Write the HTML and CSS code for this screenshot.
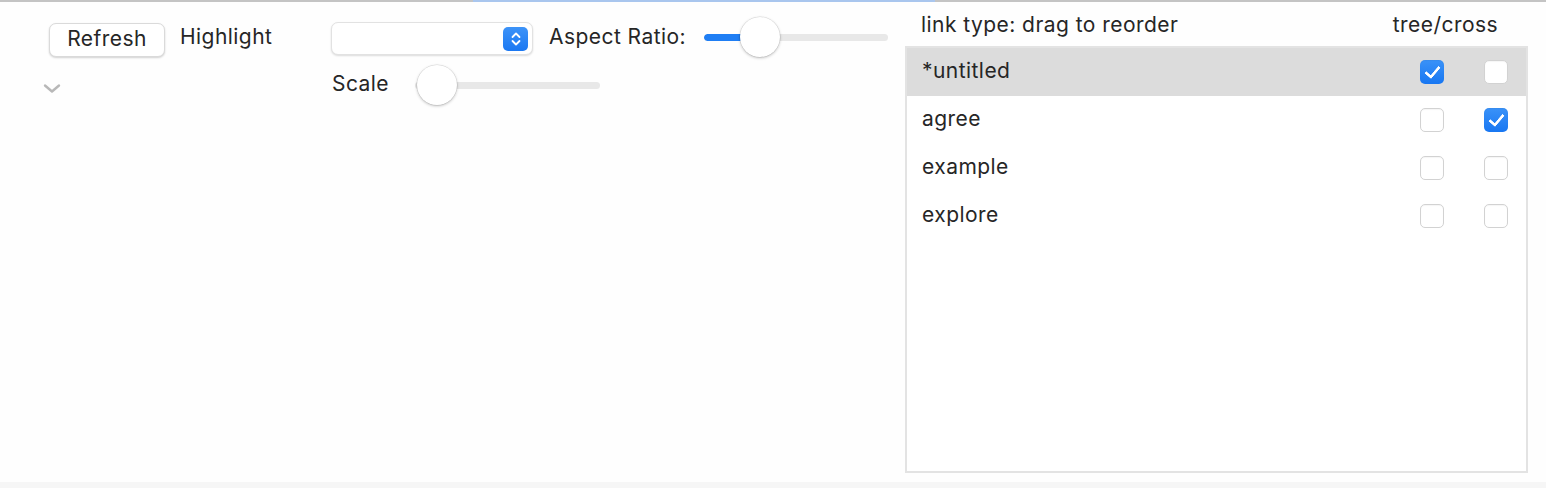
FILE: index.html
```html
<!DOCTYPE html>
<html>
<head>
<meta charset="utf-8">
<link rel="stylesheet" href="styles.css">
</head>
<body>
<div class="topbar">
  <div class="seg seg-a"></div>
  <div class="seg seg-blue"></div>
  <div class="seg seg-c"></div>
</div>
<div class="main">
  <div class="left">
    <div class="row row1">
      <button class="btn">Refresh</button>
      <span class="label label-highlight">Highlight</span>
      <div class="select">
        <span class="stepper">
          <svg width="14" height="18" viewBox="0 0 14 18"><path d="M3.5 7 L7 3.5 L10.5 7" fill="none" stroke="#fff" stroke-width="1.8" stroke-linecap="round" stroke-linejoin="round"/><path d="M3.5 11 L7 14.5 L10.5 11" fill="none" stroke="#fff" stroke-width="1.8" stroke-linecap="round" stroke-linejoin="round"/></svg>
        </span>
      </div>
      <span class="label label-aspect">Aspect Ratio:</span>
      <div class="slider slider-aspect">
        <div class="track"><div class="fill" style="width:56px"></div></div>
        <div class="thumb" style="left:36px"></div>
      </div>
    </div>
    <div class="row row2">
      <span class="chevron">
        <svg width="18" height="11" viewBox="0 0 18 11"><path d="M2 2.5 L9 8.5 L16 2.5" fill="none" stroke="#b8b8b8" stroke-width="2.4" stroke-linecap="round" stroke-linejoin="round"/></svg>
      </span>
      <span class="label label-scale">Scale</span>
      <div class="slider slider-scale">
        <div class="track"><div class="fill" style="width:0"></div></div>
        <div class="thumb" style="left:2px"></div>
      </div>
    </div>
  </div>
  <div class="right">
    <div class="panel-head">
      <span>link type: drag to reorder</span>
      <span>tree/cross</span>
    </div>
    <div class="list">
      <div class="item selected">
        <span class="name">*untitled</span>
        <span class="checks"><span class="cb on"></span><span class="cb"></span></span>
      </div>
      <div class="item">
        <span class="name">agree</span>
        <span class="checks"><span class="cb"></span><span class="cb on"></span></span>
      </div>
      <div class="item">
        <span class="name">example</span>
        <span class="checks"><span class="cb"></span><span class="cb"></span></span>
      </div>
      <div class="item">
        <span class="name">explore</span>
        <span class="checks"><span class="cb"></span><span class="cb"></span></span>
      </div>
    </div>
  </div>
</div>
<div class="bottombar"></div>
</body>
</html>
```

FILE: styles.css
```css
* { box-sizing: border-box; }
html, body { margin: 0; padding: 0; background: #fefefe; }
body {
  width: 1546px;
  height: 488px;
  overflow: hidden;
  font-family: Inter, "Liberation Sans", Arial, sans-serif;
  color: #262626;
  font-size: 21px;
  letter-spacing: 0.45px;
  display: flex;
  flex-direction: column;
}
.topbar { display: flex; height: 2px; flex: 0 0 2px; }
.seg { height: 2px; }
.seg-a { width: 473px; background: #c4c4c4; }
.seg-blue { width: 462px; background: #a9c6ee; }
.seg-c { flex: 1; background: #c4c4c4; }

.main { display: flex; flex: 1; }
.left { width: 905px; padding-top: 20px; }
.row { display: flex; align-items: flex-start; }
.row1 { padding-left: 49px; height: 40px; }
.btn {
  margin-top: 1px;
  width: 116px; height: 34px;
  font-family: inherit; font-size: 21px; letter-spacing: 0.45px; color: #262626;
  background: #fff;
  border: 1px solid #dadada;
  border-radius: 7px;
  box-shadow: 0 1px 2px rgba(0,0,0,0.18);
  padding: 0 0 2px 0;
  line-height: 30px;
}
.label { white-space: nowrap; line-height: 30px; }
.label-highlight { margin-left: 15px; width: 151px; }
.select {
  width: 202px; height: 33px;
  background: #fff;
  border: 1px solid #e2e2e2;
  border-radius: 7px;
  box-shadow: 0 1px 2px rgba(0,0,0,0.14);
  display: flex; align-items: center; justify-content: flex-end;
  padding-right: 4px;
}
.stepper {
  width: 25px; height: 24px;
  border-radius: 5px;
  background: linear-gradient(#3d93f8, #1b78f2);
  display: flex; align-items: center; justify-content: center;
}
.label-aspect { margin-left: 16px; width: 155px; }
.slider { position: relative; height: 40px; }
.slider-aspect { width: 184px; margin-top: -5px; }
.track {
  position: absolute; left: 0; right: 0; top: 17px;
  height: 7px; border-radius: 4px; background: #e8e8e8; overflow: hidden;
}
.fill { height: 100%; background: #1f7ef4; border-radius: 4px 0 0 4px; }
.thumb {
  position: absolute; top: 0;
  width: 40px; height: 40px; border-radius: 50%;
  background: #fff;
  box-shadow: 0 0 0 0.5px rgba(0,0,0,0.12), 0 1px 3px rgba(0,0,0,0.25);
}
.row2 { margin-top: 3px; height: 40px; }
.chevron { margin-left: 43px; width: 289px; display: flex; padding-top: 18px; }
.label-scale { width: 83px; padding-top: 4px; }
.slider-scale { width: 185px; }

.right { width: 623px; display: flex; flex-direction: column; }
.panel-head {
  height: 44px; display: flex; justify-content: space-between; align-items: center;
  padding: 0 30px 0 16px;
}
.list {
  height: 427px;
  border: 2px solid #e3e3e3;
  background: #fff;
}
.item {
  height: 48px; display: flex; align-items: center; justify-content: space-between;
  padding: 0 18px 3px 15px;
  font-size: 21px;
}
.item.selected { background: #dcdcdc; }
.checks { display: flex; gap: 40px; margin-top: 3px; }
.cb {
  width: 24px; height: 24px; border-radius: 5px;
  background: #fff;
  border: 1px solid #d2d2d2;
  box-shadow: inset 0 1px 1px rgba(0,0,0,0.04);
}
.cb.on {
  border: none;
  background: linear-gradient(#3a92f8, #1877f2);
  position: relative;
}
.cb.on::after {
  content: "";
  position: absolute;
  left: 8px; top: 3px;
  width: 6px; height: 12px;
  border-right: 3px solid #fff;
  border-bottom: 3px solid #fff;
  transform: rotate(40deg);
  border-radius: 1px;
}
.bottombar { height: 6px; flex: 0 0 6px; background: #f6f6f6; }
```
